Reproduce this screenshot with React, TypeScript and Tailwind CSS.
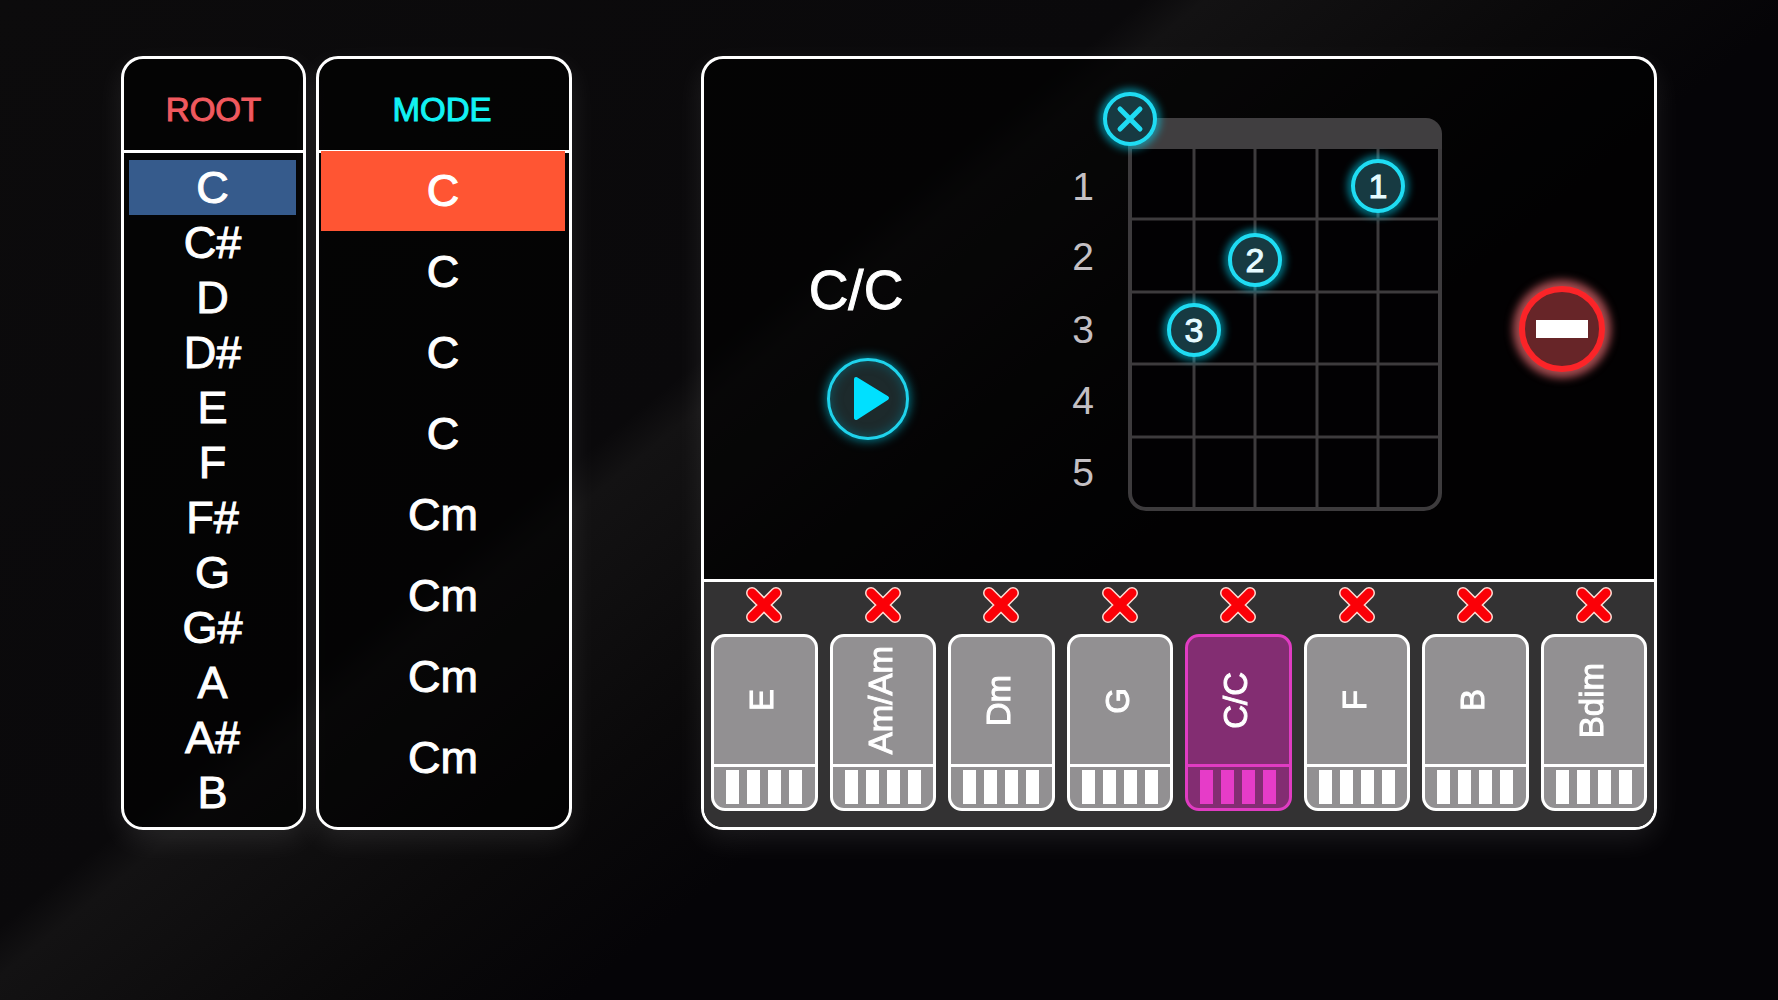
import React, { useState } from 'react';

const ROOTS = ['C', 'C#', 'D', 'D#', 'E', 'F', 'F#', 'G', 'G#', 'A', 'A#', 'B'];
const MODES = ['C', 'C', 'C', 'C', 'Cm', 'Cm', 'Cm', 'Cm'];
const CHORDS = ['E', 'Am/Am', 'Dm', 'G', 'C/C', 'F', 'B', 'Bdim'];

const STRINGS = [174, 235, 297, 358];
const FRETS = [160, 233, 305, 378];
const FRET_LABELS = [128, 198, 271, 342, 414];

interface Finger {
  label: string;
  x: number;
  y: number;
}

const FINGERS: Finger[] = [
  { label: '1', x: 358, y: 127 },
  { label: '2', x: 235, y: 201 },
  { label: '3', x: 174, y: 271 },
];

const panel =
  'rounded-[22px] border-[3px] border-white bg-black/60 overflow-hidden shadow-[0_10px_28px_rgba(255,255,255,0.09)]';

const Marker: React.FC<{ x: number; y: number; children: React.ReactNode }> = ({ x, y, children }) => (
  <g transform={`translate(${x} ${y})`}>
    <circle r="26" fill="none" stroke="#00e0ff" strokeWidth="7" opacity="0.7" filter="url(#glow)" />
    <circle r="25" fill="#173a42" stroke="#1fdcf3" strokeWidth="4" />
    {children}
  </g>
);

const Fretboard: React.FC = () => (
  <svg viewBox="0 0 450 520" className="block w-full" role="img" aria-label="C/C">
    <defs>
      <filter id="glow" x="-50%" y="-50%" width="200%" height="200%">
        <feGaussianBlur stdDeviation="4" />
      </filter>
    </defs>

    <rect x="110" y="70" width="310" height="380" rx="16" fill="#020103" stroke="#3d3b3d" strokeWidth="4" />
    <path d="M108 90V75a16 16 0 0 1 16-16h282a16 16 0 0 1 16 16v15z" fill="#403e40" />
    <g stroke="#3d3b3d" strokeWidth="3">
      {STRINGS.map((x) => (
        <line key={x} x1={x} x2={x} y1="90" y2="450" />
      ))}
      {FRETS.map((y) => (
        <line key={y} x1="110" x2="420" y1={y} y2={y} />
      ))}
    </g>

    {FRET_LABELS.map((y, i) => (
      <text key={y} x="63" y={y + 13} textAnchor="middle" fontSize="39" fill="#c4c0c4">
        {i + 1}
      </text>
    ))}

    <Marker x={110} y={60}>
      <path d="M-10-10L10 10M10-10L-10 10" stroke="#1fdcf3" strokeWidth="5" strokeLinecap="round" />
    </Marker>
    {FINGERS.map((f) => (
      <Marker key={f.label} x={f.x} y={f.y}>
        <text y="12" textAnchor="middle" fontSize="34" fill="#e6fbff" stroke="#e6fbff" strokeWidth="1">
          {f.label}
        </text>
      </Marker>
    ))}
  </svg>
);

const RemoveIcon: React.FC = () => (
  <svg viewBox="0 0 36 36" className="size-9" strokeLinecap="round">
    <path d="M6 6L30 30M30 6L6 30" stroke="#ffdcd4" strokeWidth="12" />
    <path d="M6 6L30 30M30 6L6 30" stroke="#fb0007" strokeWidth="9" />
  </svg>
);

const App: React.FC = () => {
  const [root, setRoot] = useState(0);
  const [mode, setMode] = useState(0);
  const [chord, setChord] = useState(4);

  return (
    <main className="min-h-screen bg-[linear-gradient(141deg,#0c0b0c_0%,#0a090b_38%,#131213_40%,#0a090a_52%,#050407_60%,#050407_100%)] px-[121px] py-14 font-['Liberation_Sans',Arial,sans-serif] text-white">
      <div className="grid grid-cols-[451fr_956fr] gap-[129px]">
        <div className="grid grid-cols-[185fr_256fr] gap-2.5">
          <section className={panel}>
            <h2 className="border-b-[3px] border-white pt-[31px] pb-5 text-center text-[33px] leading-10 text-[#f0595e] [-webkit-text-stroke:1px]">
              ROOT
            </h2>
            <ul className="py-[7px] pr-[7px] pl-[5px]">
              {ROOTS.map((name, i) => (
                <li key={name}>
                  <button
                    onClick={() => setRoot(i)}
                    className={`block w-full text-center text-[45px] leading-[55px] [-webkit-text-stroke:1px] ${
                      root === i ? 'bg-[#365b8c]' : ''
                    }`}
                  >
                    {name}
                  </button>
                </li>
              ))}
            </ul>
          </section>

          <section className={panel}>
            <h2 className="border-b-[3px] border-white pt-[31px] pr-1 pb-5 text-center text-[33px] leading-10 text-[#12f2f4] [-webkit-text-stroke:1px]">
              MODE
            </h2>
            <ul className="-mt-0.5 pr-1 pl-0.5">
              {MODES.map((name, i) => (
                <li key={i} className="pb-px">
                  <button
                    onClick={() => setMode(i)}
                    className={`block w-full text-center text-[45px] leading-[80px] [-webkit-text-stroke:1px] ${
                      mode === i ? 'bg-[#ff5533]' : ''
                    }`}
                  >
                    {name}
                  </button>
                </li>
              ))}
            </ul>
          </section>
        </div>

        <section className={panel}>
          <div className="grid grid-cols-[316fr_450fr_184fr] border-b-[3px] border-white">
            <div className="flex flex-col items-center justify-center gap-9 pt-15">
              <h1 className="pr-3 text-[55px] leading-[64px] [-webkit-text-stroke:1px]">{CHORDS[chord]}</h1>
              <div className="pl-3">
                <button
                  aria-label="Play"
                  className="flex size-[82px] items-center justify-center rounded-full border-[3px] border-[#1fd3ec] bg-[#1d2a2c] shadow-[0_0_12px_rgba(0,214,245,0.7),inset_0_0_12px_rgba(0,120,140,0.6)]"
                >
                  <svg viewBox="0 0 76 76" className="size-[76px]">
                    <path
                      d="M26 18L57 37L26 57Z"
                      fill="#00e0ff"
                      stroke="#00e0ff"
                      strokeWidth="4"
                      strokeLinejoin="round"
                    />
                  </svg>
                </button>
              </div>
            </div>

            <Fretboard />

            <div className="flex items-center justify-center pt-5">
              <button
                aria-label="Remove chord"
                className="flex size-[86px] items-center justify-center rounded-full border-[6px] border-[#fb2428] bg-[#672528] shadow-[0_0_8px_6px_rgba(235,110,115,0.7)]"
              >
                <span className="h-[18px] w-[52px] bg-white" />
              </button>
            </div>
          </div>

          <ul className="grid grid-cols-8 gap-3 bg-[#333233] px-[7px] pt-[5px] pb-4">
            {CHORDS.map((name, i) => (
              <li key={name} className="flex flex-col items-center gap-[11px]">
                <button aria-label={`Delete ${name}`}>
                  <RemoveIcon />
                </button>
                <button
                  onClick={() => setChord(i)}
                  className={`flex w-full flex-col overflow-hidden rounded-[14px] border-[3px] ${
                    chord === i ? 'border-[#e03cc2] bg-[#832d72]' : 'border-white bg-[#929092]'
                  }`}
                >
                  <span className="flex h-[127px] w-full items-center justify-center pr-1">
                    <span className="rotate-180 text-[33px] leading-10 [writing-mode:vertical-rl] [-webkit-text-stroke:1px]">
                      {name}
                    </span>
                  </span>
                  <span
                    className={`flex w-full justify-center gap-2 border-t-[3px] pt-[3px] pb-[4px] ${
                      chord === i ? 'border-[#e03cc2]' : 'border-white'
                    }`}
                  >
                    {[0, 1, 2, 3].map((k) => (
                      <span key={k} className={`h-[34px] w-[13px] ${chord === i ? 'bg-[#e63cc8]' : 'bg-white'}`} />
                    ))}
                  </span>
                </button>
              </li>
            ))}
          </ul>
        </section>
      </div>
    </main>
  );
};

export default App;
